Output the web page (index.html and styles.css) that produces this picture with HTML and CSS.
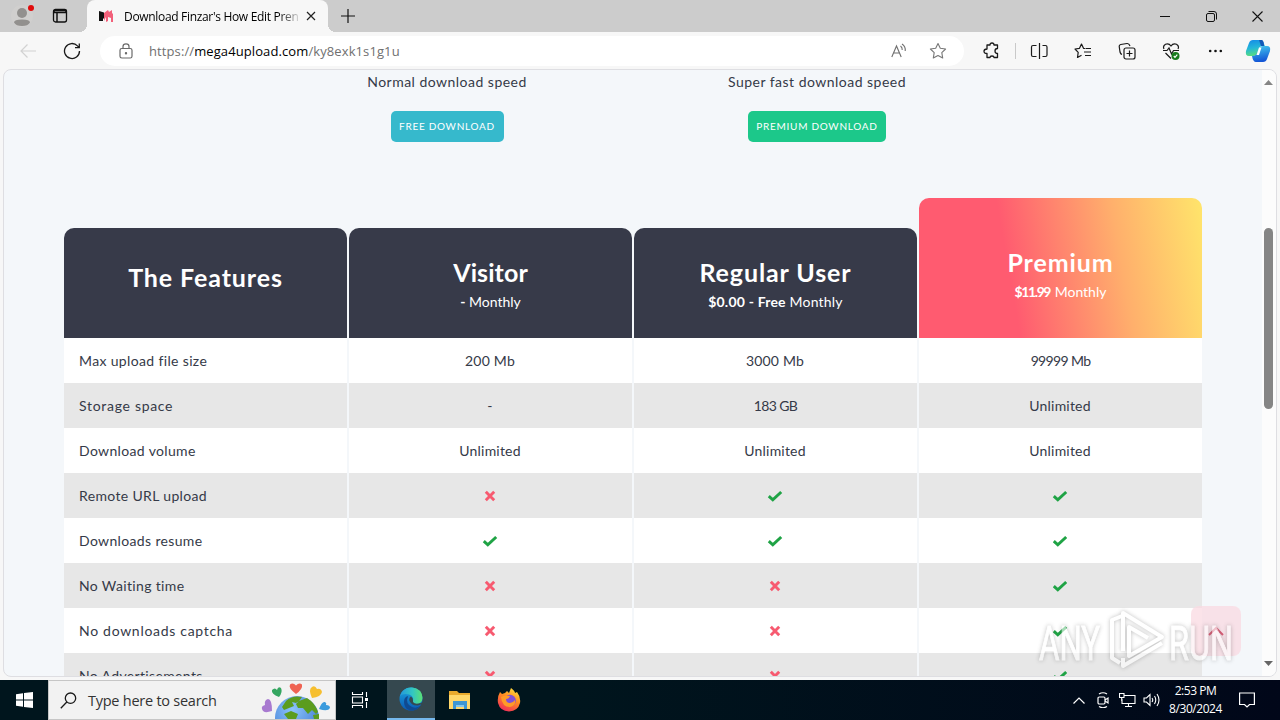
FILE: index.html
```
<!DOCTYPE html>
<html lang="en">
<head>
    <meta charset="UTF-8">
    <meta name="viewport" content="width=device-width, initial-scale=1.0">
    <title>Download Finzar's How Edit Premium</title>
    <link rel="stylesheet" href="styles.css">
</head>
<body>
    <svg class="defs" aria-hidden="true">
        <symbol id="check" viewBox="0 0 16 12"><path d="M1.8 6.2 5.8 9.8 14.2 2" fill="none" stroke="#1fa345" stroke-width="3"/></symbol>
        <symbol id="cross" viewBox="0 0 12 12"><path d="M1.8 1.8 10.2 10.2M10.2 1.8 1.8 10.2" fill="none" stroke="#f75a70" stroke-width="2.9"/></symbol>
    </svg>

    <!-- tabs -->
    <div class="tab-bar">
        <div class="profile">
            <svg width="26" height="28" viewBox="0 0 26 28">
                <circle cx="12" cy="14" r="11" fill="#d0cfce"/>
                <circle cx="12" cy="11" r="5" fill="#92908e"/>
                <path d="M4 20.500Q4 17.500 12 17.500T20 20.500Q18 24 12 24T4 20.500Z" fill="#92908e"/>
                <circle cx="21" cy="6" r="3" fill="#e00b0b"/>
            </svg>
        </div>
        <svg class="workspaces" width="16" height="16" viewBox="0 0 16 16" fill="none" stroke="#111" stroke-width="1.300">
            <rect x="1.500" y="1.500" width="13" height="12.500" rx="2"/><path d="M2 2.500H14V4.500H2ZM5 5V14" stroke-width="1.500"/>
        </svg>
        <div class="tab">
            <svg width="14" height="14" viewBox="0 0 14 14">
                <path d="M0 2 5 3.500V9L4 10V12H0Z" fill="#111"/>
                <path d="M5 4 9 1 10 3 13 1V4L14 5V13H12V9L9 8V12L7 13V8L5 12Z" fill="#f2607a"/>
            </svg>
            <span class="tab-title">Download Finzar's How Edit Pren</span>
            <svg class="tab-close" width="10" height="10" viewBox="0 0 10 10" stroke="#222" stroke-width="1.200"><path d="M1 1 9 9M9 1 1 9"/></svg>
        </div>
        <svg class="new-tab" width="14" height="14" viewBox="0 0 14 14" stroke="#111" stroke-width="1.200"><path d="M7 0V14M0 7H14"/></svg>
        <div class="window-buttons">
            <svg width="11" height="11" viewBox="0 0 11 11" stroke="#111"><path d="M0 5.500H10"/></svg>
            <svg width="11" height="11" viewBox="0 0 11 11" fill="none" stroke="#111"><rect x=".5" y="2.500" width="8" height="8" rx="1.500"/><path d="M2.500.5H8Q10.500.5 10.500 3V8.500"/></svg>
            <svg width="11" height="11" viewBox="0 0 11 11" stroke="#111" stroke-width="1.100"><path d="M.5.5 10.500 10.500M10.500.5.5 10.500"/></svg>
        </div>
    </div>

    <!-- address bar -->
    <div class="toolbar">
        <svg class="back" width="16" height="14" viewBox="0 0 16 14" fill="none" stroke="#d2d2d2" stroke-width="1.200"><path d="M16 7H1M7.500.5 1 7 7.500 13.500"/></svg>
        <svg class="reload" width="18" height="18" viewBox="0 0 18 18" fill="none" stroke="#1a1a1a" stroke-width="1.300"><path d="M16.500 9A7.500 7.500 0 1 1 14.500 3.900L16.300 5.700M16.300 1.500V5.700H12"/></svg>
        <div class="address">
            <svg width="14" height="16" viewBox="0 0 14 16" fill="none" stroke="#6a6a6a" stroke-width="1.200"><rect x="1" y="5.500" width="12" height="9.500" rx="1.800"/><path d="M4 5.500V3.500Q4 .8 7 .8T10 3.500V5.500"/><circle cx="7" cy="10.200" r=".6" fill="#6a6a6a"/></svg>
            <span class="url">https://<b>mega4upload.com</b>/ky8exk1s1g1u</span>
            <svg class="read-aloud" width="16" height="16" viewBox="0 0 16 16" fill="none" stroke="#6f6f6f" stroke-width="1.100"><path d="M.8 14 5.500 3 10.200 14M2.500 10H8.500M9.500 3Q11.500 4.500 11.200 7M11 1Q14.800 3.500 14.200 8"/></svg>
            <svg width="18" height="18" viewBox="0 0 18 18" fill="none" stroke="#777" stroke-width="1.100" stroke-linejoin="round"><path d="M9 1.500 11.300 6.300 16.600 7 12.800 10.700 13.700 16 9 13.500 4.300 16 5.200 10.700 1.400 7 6.700 6.300Z"/></svg>
        </div>
        <div class="tools">
            <svg width="18" height="18" viewBox="0 0 18 18" fill="none" stroke="#1a1a1a" stroke-width="1.300"><path d="M4 3H7Q7 1 9 1T11 3H14.500V6.500Q12 6.500 12 9T14.500 11.500V15.500H11Q11 14 9 14T7 15.500H4V11.500Q1 11.500 1 9.300T4 7Z" stroke-linejoin="round"/></svg>
            <i class="divider"></i>
            <svg width="18" height="18" viewBox="0 0 18 18" fill="none" stroke="#1a1a1a" stroke-width="1.200"><path d="M9.500 1V17M6.500 3.500H3Q1.500 3.500 1.500 5V13Q1.500 14.500 3 14.500H6.500M12.500 3.500H15.500Q17 3.500 17 5V13Q17 14.500 15.500 14.500H12.500"/></svg>
            <svg width="18" height="18" viewBox="0 0 18 18" fill="none" stroke="#1a1a1a" stroke-width="1.200" stroke-linejoin="round"><path d="M11 6.500 9.500 6.300 7.500 2 5.500 6.300 1 7 4.200 10.300 3.500 15.500 7.500 13.300M11.500 6.500H17M10 10H17M11 13.500H17"/></svg>
            <svg width="18" height="18" viewBox="0 0 18 18" fill="none" stroke="#1a1a1a" stroke-width="1.200"><rect x="6" y="6" width="11" height="11" rx="2"/><path d="M11.500 8.500V14.500M8.500 11.500H14.500M4 12.500Q2.500 12 2 10L1.200 4.500Q1 3 2.700 2.500L9 1.500Q11 1.300 12 4"/></svg>
            <svg width="18" height="18" viewBox="0 0 18 18" fill="none" stroke="#1a1a1a" stroke-width="1.200"><path d="M2 7Q.5 4 3.500 2.200 7 1 9 4 11 1 14.500 2.200 17.500 4 16 7M3.500 11 9 16.500M1 8.500H5L7 6 9.500 12 11.500 8.500H17"/><circle cx="13.500" cy="14" r="4" fill="#177a1c" stroke="none"/><path d="M11.800 14 13 15.300 15.300 12.700" stroke="#fff"/></svg>
            <svg width="18" height="18" viewBox="0 0 18 18" fill="#111"><circle cx="4.200" cy="9" r="1.300"/><circle cx="9.500" cy="9" r="1.300"/><circle cx="14.800" cy="9" r="1.300"/></svg>
            <svg class="copilot" width="26" height="24" viewBox="0 0 26 24">
                <defs>
                    <linearGradient id="cpA" x2=".2" y2="1"><stop stop-color="#1389e8"/><stop offset=".55" stop-color="#24b7d8"/><stop offset="1" stop-color="#55dc83"/></linearGradient>
                    <linearGradient id="cpB" x2=".2" y2="1"><stop stop-color="#43cbef"/><stop offset="1" stop-color="#1457d6"/></linearGradient>
                </defs>
                <path d="M8 1H16Q18 1 19 5L20 7Q15 6 14 10L12 15Q11 17 8 17H4Q0 17 1 12L4 4Q5 1 8 1Z" fill="url(#cpA)"/>
                <path d="M18 7H22Q26 7 25 12L22 20Q21 23 18 23H11Q8 23 7 17Q11 17 12 14L14 9Q15 7 18 7Z" fill="url(#cpB)"/>
                <path d="M11.500 16 14 8.500H16.500L14 16Z" fill="#fff"/>
                <path d="M14 1H17Q19 2 19 7H16Z" fill="#1259b8"/>
            </svg>
        </div>
    </div>

    <div class="viewport">
        <div class="page">
            <div class="downloads">
                <div class="download">
                    <p>Normal download speed</p>
                    <a class="btn btn-free">FREE DOWNLOAD</a>
                </div>
                <div class="download">
                    <p>Super fast download speed</p>
                    <a class="btn btn-premium">PREMIUM DOWNLOAD</a>
                </div>
            </div>

            <div class="plans">
                <div class="plan features">
                    <div class="plan-head"><h2>The Features</h2></div>
                    <div class="cell">Max upload file size</div>
                    <div class="cell wide">Storage space</div>
                    <div class="cell">Download volume</div>
                    <div class="cell">Remote URL upload</div>
                    <div class="cell">Downloads resume</div>
                    <div class="cell">No Waiting time</div>
                    <div class="cell wide">No downloads captcha</div>
                    <div class="cell">No Advertisements</div>
                </div>
                <div class="plan visitor">
                    <div class="plan-head"><h2>Visitor</h2><p><b>-</b> Monthly</p></div>
                    <div class="cell">200 Mb</div>
                    <div class="cell">-</div>
                    <div class="cell">Unlimited</div>
                    <div class="cell"><svg class="cross"><use href="#cross"/></svg></div>
                    <div class="cell"><svg class="check"><use href="#check"/></svg></div>
                    <div class="cell"><svg class="cross"><use href="#cross"/></svg></div>
                    <div class="cell"><svg class="cross"><use href="#cross"/></svg></div>
                    <div class="cell"><svg class="cross"><use href="#cross"/></svg></div>
                </div>
                <div class="plan">
                    <div class="plan-head"><h2>Regular User</h2><p><b>$0.00 - Free</b> Monthly</p></div>
                    <div class="cell">3000 Mb</div>
                    <div class="cell narrow">183 GB</div>
                    <div class="cell">Unlimited</div>
                    <div class="cell"><svg class="check"><use href="#check"/></svg></div>
                    <div class="cell"><svg class="check"><use href="#check"/></svg></div>
                    <div class="cell"><svg class="cross"><use href="#cross"/></svg></div>
                    <div class="cell"><svg class="cross"><use href="#cross"/></svg></div>
                    <div class="cell"><svg class="cross"><use href="#cross"/></svg></div>
                </div>
                <div class="plan premium">
                    <div class="plan-head"><h2>Premium</h2><p><b>$11.99</b> Monthly</p></div>
                    <div class="cell narrow">99999 Mb</div>
                    <div class="cell">Unlimited</div>
                    <div class="cell">Unlimited</div>
                    <div class="cell"><svg class="check"><use href="#check"/></svg></div>
                    <div class="cell"><svg class="check"><use href="#check"/></svg></div>
                    <div class="cell"><svg class="check"><use href="#check"/></svg></div>
                    <div class="cell"><svg class="check"><use href="#check"/></svg></div>
                    <div class="cell"><svg class="check"><use href="#check"/></svg></div>
                </div>
            </div>
        </div>
        <div class="scrollbar">
            <svg width="9" height="5" viewBox="0 0 9 5" fill="#858585"><path d="M0 5 4.500 0 9 5Z"/></svg>
            <i class="thumb"></i>
            <svg width="9" height="5" viewBox="0 0 9 5" fill="#666"><path d="M0 0 4.500 5 9 0Z"/></svg>
        </div>
        <div class="to-top">
            <svg width="16" height="10" viewBox="0 0 16 10" fill="none" stroke="#d95c76" stroke-width="2"><path d="M1 9 8 2 15 9"/></svg>
        </div>
        <svg class="watermark" width="200" height="66" viewBox="0 0 200 66">
            <text x="3" y="54" textLength="61" lengthAdjust="spacingAndGlyphs">ANY</text>
            <g class="play">
                <path d="M84 57 76 52V14L86 10"/>
                <path d="M87 45V7L126 31 93 50V21L112 32"/>
                <path d="M87 52V60L126 37"/>
            </g>
            <text x="133" y="54" textLength="64" lengthAdjust="spacingAndGlyphs">RUN</text>
        </svg>
    </div>

    <div class="taskbar">
        <div class="start">
            <svg width="17" height="16" viewBox="0 0 17 16" fill="#fff"><path d="M0 2.200 7 1.200V7.500H0ZM8 1.100 17 0V7.500H8ZM0 8.500H7V14.800L0 13.800ZM8 8.500H17V16L8 14.900Z"/></svg>
        </div>
        <div class="search">
            <svg width="17" height="17" viewBox="0 0 17 17" fill="none" stroke="#1a1a1a" stroke-width="1.300"><circle cx="10.500" cy="6.200" r="5.200"/><path d="M6.800 10 .8 16.200"/></svg>
            <span>Type here to search</span>
            <svg class="earth" width="72" height="38" viewBox="0 0 72 38">
                <defs><radialGradient id="sea" cx=".4" cy=".3" r=".8"><stop stop-color="#8cc4fb"/><stop offset="1" stop-color="#3973cf"/></radialGradient></defs>
                <circle cx="37" cy="37" r="22" fill="url(#sea)"/>
                <path d="M26 20Q32 14 42 16 40 20 36 22L32 21 34 25 29 27 24 29 22 26ZM39 20 47 17Q55 22 58 31L56 33 52 29 48 33 43 27 38 27 36 23ZM24 33 31 30 38 33 36 38H28ZM53 34 59 33 59 38H54Z" fill="#5b9c1e"/>
                <path d="M36 13Q28 7 30 3.500 33 1 36 4.500 39 1 42 3.500 43 8 36 13Z" fill="#ef6353"/>
                <path d="M19 16Q11 13 12 9 15 6 17 9 18 5 21 7 23 11 19 16Z" fill="#35a660"/>
                <path d="M52 17Q48 8 52 6 55 4 57 8 61 7 62 11 61 16 52 17Z" fill="#f6bf30"/>
                <path d="M12 30Q3 33 2 28 1 25 5 24 4 19 8 18 12 18 12 30Z" fill="#a87ad0"/>
                <path d="M59 28Q62 20 65 21 67 22 66 24 70 24 70 27 68 31 59 28Z" fill="#3a9bdd"/>
            </svg>
        </div>
        <div class="task">
            <svg width="18" height="18" viewBox="0 0 18 18" fill="none" stroke="#fff" stroke-width="1.100"><path d="M1.500 1V3.500H11.500V1M1.500 17V14.500H11.500V17M1.500 6H11.500V12H1.500ZM15.500 1V6M15.500 11V17"/><path d="M14 7H17V10H14Z" fill="#fff" stroke="none"/></svg>
        </div>
        <div class="task active">
            <svg width="24" height="24" viewBox="0 0 24 24">
                <defs>
                    <linearGradient id="edgeTop" x2="1"><stop stop-color="#2498dc"/><stop offset=".55" stop-color="#32c6c3"/><stop offset="1" stop-color="#5be174"/></linearGradient>
                    <linearGradient id="edgeLow" x2="0" y2="1"><stop stop-color="#1ba6df"/><stop offset="1" stop-color="#0b58b4"/></linearGradient>
                </defs>
                <circle cx="12" cy="12" r="11.500" fill="url(#edgeLow)"/>
                <path d="M1 9Q4 0 13 .5 23 1.500 23.500 11 23 17 17 17 13 17 14 14 15 9 10 7.500 4 6 1 9Z" fill="url(#edgeTop)"/>
                <path d="M9 9Q6 17 13 20 18 22 22 18 18 24 12 23.500 5 22 5 15 5 10 9 9Z" fill="#104a91"/>
                <path d="M12 9.500Q9.500 11 10.500 14 13 19 19 18.500L23 17 23.500 18Q25 14 22 16 16 18 14 15 14.500 11 12 9.500Z" fill="#35484f"/>
            </svg>
        </div>
        <div class="task">
            <svg width="22" height="20" viewBox="0 0 22 20"><path d="M0 1H8L10 3H21V19H0Z" fill="#e9aa2d"/><path d="M0 5H21V19H0Z" fill="#ffd76a"/><path d="M4 11H18V19H15V15H7V19H4Z" fill="#3d96d3"/><path d="M7 15H15V17H7Z" fill="#86c7ec"/></svg>
        </div>
        <div class="task">
            <svg width="24" height="24" viewBox="0 0 24 24">
                <defs><linearGradient id="fox" x1=".8" x2=".3" y2="1"><stop stop-color="#ffe33f"/><stop offset=".45" stop-color="#ff8c22"/><stop offset="1" stop-color="#f12c59"/></linearGradient></defs>
                <path d="M3 4 5 6 8 5 10 3 12 5 14 0Q18 3 18 5L20 4Q24 9 23 15 21 23 12 23.500 3 23 1 15 0 9 3 4Z" fill="url(#fox)"/>
                <circle cx="13" cy="12.500" r="5.800" fill="#8050d7"/>
                <path d="M4 9Q7 7 13 8 12 11 9 11 9 15 13 15 16 15 18 12 19 18 13 19 5 19 4 9Z" fill="#ff9b27"/>
            </svg>
        </div>
        <div class="tray">
            <svg width="12" height="7" viewBox="0 0 12 7" fill="none" stroke="#fff" stroke-width="1.200"><path d="M.5 6.500 6 1 11.500 6.500"/></svg>
            <svg class="meet" width="12" height="16" viewBox="0 0 12 16" fill="none" stroke="#fff" stroke-width="1.200"><rect x="1" y="5" width="7" height="7" rx="1.200"/><path d="M8 8 11 6V11L8 9M2 2Q6-.5 10 2M2 14.500Q6 17 10 14.500"/></svg>
            <svg class="net" width="17" height="14" viewBox="0 0 17 14" fill="none" stroke="#fff" stroke-width="1.100"><path d="M5 2.500H16V10.500H3V6M9.500 10.500V13.500M6 13.500H13M.5.5H5V4.500H.5ZM2.700 4.500V8"/></svg>
            <svg class="sound" width="18" height="14" viewBox="0 0 18 14" fill="none" stroke="#fff" stroke-width="1.100"><path d="M1 5H3.500L7 1.500V12.500L3.500 9H1ZM9 5Q10.500 7 9 9M11.500 3Q14 7 11.500 11M14 1Q18 7 14 13"/></svg>
            <div class="clock"><span>2:53 PM</span><span>8/30/2024</span></div>
            <svg class="notify" width="16" height="16" viewBox="0 0 16 16" fill="none" stroke="#fff" stroke-width="1.200"><path d="M.6 1H15.400V12.500H10.500L8 15 5.500 12.500H.6Z"/></svg>
        </div>
    </div>
</body>
</html>
```
FILE: styles.css
```
* {
    box-sizing: border-box;
}

body {
    margin: 0;
    width: 1280px;
    height: 720px;
    display: flex;
    flex-direction: column;
    overflow: hidden;
    background-color: #f7f7f7;
    font-family: "Open Sans", "Noto Sans", sans-serif;
}

svg {
    display: block;
    flex: none;
}

p, h2 {
    margin: 0;
}

.defs {
    position: absolute;
    width: 0;
    height: 0;
}

/* Tabs */
.tab-bar {
    flex: none;
    display: flex;
    align-items: center;
    height: 32px;
    background-color: #cccccc;
}

.profile {
    padding-left: 10px;
}

.workspaces {
    margin-left: 16px;
}

.tab {
    position: relative;
    display: flex;
    align-items: center;
    width: 241px;
    height: 32px;
    margin-left: 19px;
    padding: 0 11px 0 12px;
    border-radius: 8px 8px 0 0;
    background-color: #f7f7f7;
}

/* curved feet of the active tab */
.tab::before,
.tab::after {
    content: "";
    position: absolute;
    bottom: 0;
    width: 8px;
    height: 8px;
}

.tab::before {
    left: -8px;
    background: radial-gradient(circle at 0 0, transparent 8px, #f7f7f7 8px);
}

.tab::after {
    right: -8px;
    background: radial-gradient(circle at 100% 0, transparent 8px, #f7f7f7 8px);
}

.tab-title {
    flex: none;
    width: 175px;
    margin-left: 11px;
    white-space: nowrap;
    font-size: 12px;
    letter-spacing: -0.32px;
    -webkit-mask-image: linear-gradient(to right, #000 155px, transparent 178px);
    mask-image: linear-gradient(to right, #000 155px, transparent 178px);
}

.tab-close {
    margin-left: 7px;
}

.new-tab {
    margin-left: 13px;
}

.window-buttons {
    display: flex;
    gap: 35px;
    margin-left: auto;
    padding-right: 17px;
}

/* Address bar */
.toolbar {
    flex: none;
    display: flex;
    align-items: center;
    height: 37px;
    padding-left: 20px;
}

.reload {
    margin-left: 27px;
}

.address {
    display: flex;
    align-items: center;
    width: 864px;
    height: 30px;
    margin-left: 19px;
    padding: 0 17px 0 19px;
    border-radius: 15px;
    background-color: #fff;
}

.url {
    margin-left: 16px;
    font-size: 13px;
    color: #707070;
    letter-spacing: 0.1px;
}

.url b {
    font-weight: normal;
    color: #000;
}

.read-aloud {
    margin: 0 22px 0 auto;
}

.tools {
    display: flex;
    align-items: center;
    gap: 26px;
    padding-left: 19px;
}

.divider {
    width: 1px;
    height: 16px;
    margin: 0 -12px;
    background-color: #c9c9c9;
}

.copilot {
    margin-left: -5px;
}

/* Page */
.viewport {
    position: relative;
    flex: none;
    display: flex;
    width: 1274px;
    height: 608px;
    margin: 0 3px;
    overflow: hidden;
    border: 1px solid #dedee2;
    border-radius: 8px;
    background-color: #f4f7fa;
}

.page {
    flex: 1;
    padding: 0 60px;
    font-family: Lato, "Open Sans", sans-serif;
    font-size: 14px;
    letter-spacing: 0.2px;
    color: #353a48;
}

.downloads {
    display: flex;
    justify-content: center;
}

.download {
    display: flex;
    flex-direction: column;
    align-items: center;
    width: 370px;
    height: 128px;
    padding-right: 2px;
}

.download p {
    height: 41px;
    line-height: 24px;
    letter-spacing: 0.48px;
}

.btn {
    width: 113px;
    height: 31px;
    line-height: 31px;
    border-radius: 5px;
    text-align: center;
    color: #fff;
    font-size: 10px;
    letter-spacing: 0.72px;
}

.btn-free {
    background-color: #36b9cc;
}

.btn-premium {
    width: 138px;
    background-color: #1cc88a;
}

.plans {
    display: flex;
    align-items: flex-end;
    gap: 2px;
}

.plan {
    width: 283px;
    text-align: center;
}

.plan-head {
    display: flex;
    flex-direction: column;
    height: 110px;
    padding-top: 29px;
    border-radius: 10px 10px 0 0;
    background-color: #373a49;
    color: #fff;
}

.plan-head h2 {
    font-size: 25px;
    line-height: 30px;
    font-weight: bold;
    letter-spacing: 0.9px;
}

.plan-head p {
    line-height: 30px;
}

.features .plan-head {
    padding-top: 34px;
}

.visitor .plan-head h2 {
    letter-spacing: 0.1px;
}

.visitor p {
    letter-spacing: 0;
}

.premium .plan-head {
    height: 140px;
    padding-top: 49px;
    background: linear-gradient(80deg, #ff5b70 33%, #ffaf6c 70%, #ffe56b);
}

.premium p {
    letter-spacing: 0;
}

.premium b {
    letter-spacing: -1.4px;
    margin-right: 1px;
}

.cell {
    display: flex;
    align-items: center;
    justify-content: center;
    height: 45px;
    padding: 0 16px 0 15px;
    background-color: #fff;
}

.cell:nth-child(odd) {
    background-color: #e7e7e7;
}

.cell.narrow {
    padding-right: 15px;
    letter-spacing: -0.65px;
}

.features .cell {
    justify-content: flex-start;
    letter-spacing: 0.35px;
}

.features .wide {
    letter-spacing: 0.7px;
}

.check {
    width: 16px;
    height: 12px;
}

.cross {
    width: 12px;
    height: 12px;
}

.scrollbar {
    display: flex;
    flex-direction: column;
    align-items: center;
    width: 14px;
    padding: 10px 2px 10px 0;
    background-color: #fcfcfc;
}

.thumb {
    width: 9px;
    height: 181px;
    margin: 143px 0 auto;
    border-radius: 5px;
    background-color: #858585;
}

.to-top {
    position: absolute;
    right: 35px;
    bottom: 20px;
    display: flex;
    align-items: center;
    justify-content: center;
    width: 50px;
    height: 50px;
    border-radius: 8px;
    background-color: rgba(250, 218, 225, 0.75);
}

.watermark {
    position: absolute;
    right: 40px;
    bottom: 4px;
    filter: drop-shadow(0 0 2px rgba(80, 80, 80, 0.6));
    opacity: 0.6;
}

.watermark text {
    font-family: Roboto, sans-serif;
    font-size: 49px;
    fill: #fff;
    stroke: #fff;
    stroke-width: 1;
}

.play {
    fill: none;
    stroke: #fff;
    stroke-width: 4;
    stroke-linejoin: round;
}

/* Taskbar */
.taskbar {
    display: flex;
    height: 40px;
    margin-top: 3px;
    background: linear-gradient(to right, #00151d 45%, #010719);
    color: #fff;
}

.start,
.task {
    display: flex;
    align-items: center;
    justify-content: center;
    width: 48px;
}

.task {
    width: 49px;
}

.search {
    display: flex;
    align-items: center;
    width: 288px;
    padding-left: 11px;
    border: 1px solid #c6c6c6;
    background-color: #f2f2f2;
    color: #333;
    font-size: 14.5px;
}

.search span {
    margin-left: 11px;
    white-space: nowrap;
    letter-spacing: -0.25px;
}

.earth {
    margin: 0 3px 0 auto;
}

.search + .task {
    width: 51px;
    padding-right: 4px;
}

.task.active {
    width: 48px;
    border-bottom: 2px solid #76b9ed;
    background-color: #35484f;
}

.tray {
    display: flex;
    align-items: center;
    margin-left: auto;
    padding-right: 25px;
}

.meet {
    margin-left: 12px;
}

.net {
    margin-left: 10px;
}

.sound {
    margin-left: 7px;
}

.clock {
    display: flex;
    flex-direction: column;
    align-items: center;
    width: 69px;
    margin-right: 9px;
    font-size: 12px;
    line-height: 18px;
    letter-spacing: -0.45px;
}
```
